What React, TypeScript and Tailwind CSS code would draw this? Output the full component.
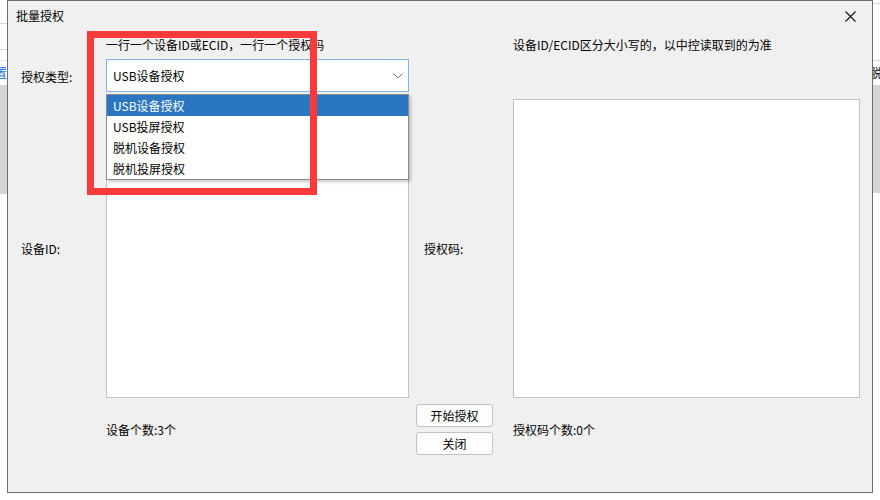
import React from "react";

const font = { fontFamily: '"Noto Sans CJK SC", "Microsoft YaHei", sans-serif' };

function Chevron() {
  return (
    <svg width="10" height="6" viewBox="0 0 10 6" className="block">
      <polyline points="0.5,0.5 5,5 9.5,0.5" fill="none" stroke="#777" strokeWidth="1" />
    </svg>
  );
}

function CloseX() {
  return (
    <svg width="11" height="11" viewBox="0 0 11 11" className="block">
      <path d="M0.5 0.5 L10.5 10.5 M10.5 0.5 L0.5 10.5" stroke="#111" strokeWidth="1.1" fill="none" />
    </svg>
  );
}

const items = ["USB设备授权", "USB投屏授权", "脱机设备授权", "脱机投屏授权"];

export default function App() {
  return (
    <div
      className="w-[880px] h-[500px] bg-white flex flex-row items-start overflow-hidden text-[12px] text-black"
      style={font}
    >
      {/* left strip of window behind */}
      <div className="w-[7px] flex flex-col overflow-hidden">
        <div className="h-[23px]" />
        <div className="h-px bg-[#d7d7d7]" />
        <div className="h-[25px]" />
        <div className="h-px bg-[#d7d7d7]" />
        <div className="h-[10px]" />
        <div className="h-px bg-[#e3e3e3]" />
        <div className="h-[24px] flex justify-end items-center overflow-hidden text-[#1f6fd0] leading-none">
          <span className="whitespace-nowrap">置</span>
        </div>
        <div className="h-[109px] bg-[#d4d4d4]" />
      </div>

      {/* dialog */}
      <div className="relative w-[866px] h-[493px] border border-[#6e6e6e] bg-[#f0f0f0] flex flex-col">
        {/* title bar */}
        <div className="h-[30px] flex items-center justify-between pl-[8px] pr-[16px]">
          <span className="leading-none">批量授权</span>
          <CloseX />
        </div>

        {/* hint row */}
        <div className="h-[28px] flex items-center">
          <div className="w-[98px]" />
          <div className="w-[407px] leading-none whitespace-nowrap">一行一个设备ID或ECID，一行一个授权码</div>
          <div className="leading-none whitespace-nowrap">设备ID/ECID区分大小写的，以中控读取到的为准</div>
        </div>

        {/* combo row */}
        <div className="h-[33px] flex">
          <div className="w-[98px] pl-[13px] pt-[3px] flex items-center leading-none">授权类型:</div>
          <div className="relative w-[303px] h-[33px] z-10">
            <div className="h-full border border-[#84b5e6] bg-white flex items-center justify-between pl-[6px] pr-[5px]">
              <span className="leading-none">USB设备授权</span>
              <Chevron />
            </div>
            <div className="absolute left-0 top-[35px] w-[303px] border border-[#8c8c8c] bg-white shadow-[2px_2px_3px_rgba(0,0,0,0.22)] flex flex-col">
              {items.map((t, i) => (
                <div
                  key={t}
                  className={
                    i === 0
                      ? "h-[21px] flex items-center pl-[6px] bg-[#2a76c0] text-white leading-none"
                      : "h-[21px] flex items-center pl-[6px] leading-none"
                  }
                >
                  {t}
                </div>
              ))}
            </div>
          </div>
        </div>

        {/* text area row */}
        <div className="mt-[7px] h-[299px] flex">
          <div className="w-[98px] pl-[13px] flex items-center leading-none">设备ID:</div>
          <div className="w-[303px] h-full border border-[#c2c2c2] bg-white" />
          <div className="w-[104px] pl-[15px] flex items-center leading-none">授权码:</div>
          <div className="w-[347px] h-full border border-[#c2c2c2] bg-white" />
        </div>

        {/* bottom row */}
        <div className="mt-[6px] h-[51px] flex">
          <div className="w-[98px]" />
          <div className="w-[303px] flex items-center leading-none">设备个数:3个</div>
          <div className="w-[104px] pl-[7px] flex flex-col gap-[5px]">
            <button className="w-[77px] h-[23px] rounded-[3px] border border-[#c3c3c3] bg-[#fdfdfd] flex items-center justify-center leading-none">
              开始授权
            </button>
            <button className="w-[77px] h-[23px] rounded-[3px] border border-[#c3c3c3] bg-[#fdfdfd] flex items-center justify-center leading-none">
              关闭
            </button>
          </div>
          <div className="flex items-center leading-none">授权码个数:0个</div>
        </div>

        {/* red annotation rectangle */}
        <div className="absolute left-[79px] top-[30px] w-[230px] h-[164px] border-[7px] border-[#f83a3a] z-20 pointer-events-none" />
      </div>

      {/* right strip of window behind */}
      <div className="w-[7px] flex flex-col overflow-hidden">
        <div className="h-[3px]" />
        <div className="h-px bg-[#d7d7d7]" />
        <div className="h-[56px]" />
        <div className="h-px bg-[#d7d7d7]" />
        <div className="h-[24px] flex items-center overflow-hidden leading-none">
          <span className="whitespace-nowrap -ml-[3px]">脱机</span>
        </div>
        <div className="h-px bg-[#d7d7d7]" />
        <div className="h-[107px] bg-[#d4d4d4]" />
      </div>
    </div>
  );
}
